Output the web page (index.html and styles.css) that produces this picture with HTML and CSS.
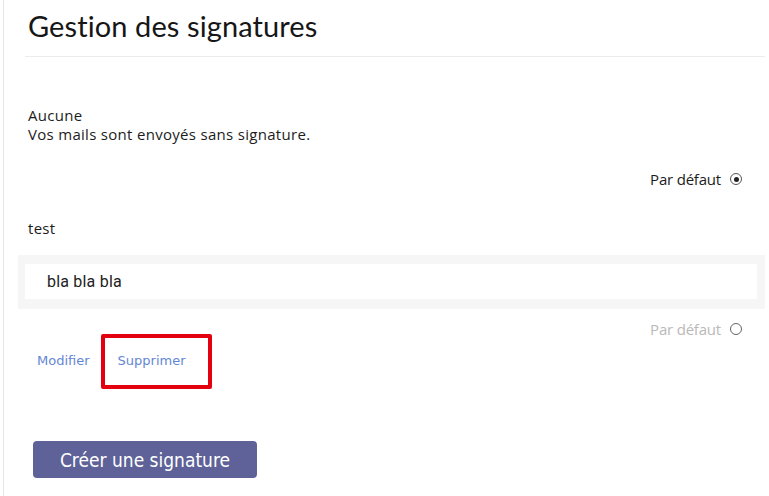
FILE: index.html
```html
<!DOCTYPE html>
<html lang="fr">
<head>
<meta charset="utf-8">
<title>Gestion des signatures</title>
<link rel="stylesheet" href="styles.css">
</head>
<body>
<div class="page">
  <header class="header">
    <h1 class="title">Gestion des signatures</h1>
  </header>

  <section class="sig sig-none">
    <div class="sig-name">Aucune</div>
    <div class="sig-desc">Vos mails sont envoyés sans signature.</div>
    <div class="default-row">
      <span class="default-label">Par défaut</span>
      <span class="radio radio-on"><span class="dot"></span></span>
    </div>
  </section>

  <section class="sig sig-test">
    <div class="sig-name">test</div>
    <div class="preview">
      <div class="preview-inner">bla bla bla</div>
    </div>
    <div class="default-row muted">
      <span class="default-label">Par défaut</span>
      <span class="radio"></span>
    </div>
    <div class="actions">
      <a class="action" href="#">Modifier</a>
      <a class="action action-marked" href="#">Supprimer<span class="mark"></span></a>
    </div>
  </section>

  <div class="footer">
    <button class="btn-create" type="button">Créer une signature</button>
  </div>
</div>
</body>
</html>
```
FILE: styles.css
```css
html, body {
  margin: 0;
  padding: 0;
  background: #ffffff;
}

body {
  font-family: "Open Sans", Lato, sans-serif;
  color: #1a1a1a;
  width: 769px;
  height: 496px;
  overflow: hidden;
}

.page {
  margin-left: 3px;
  border-left: 1px solid #e6e6e6;
  height: 496px;
  padding-left: 21px;
  padding-right: 4px;
  box-sizing: border-box;
}

.header {
  height: 57px;
  border-bottom: 1px solid #ececec;
  box-sizing: border-box;
  padding-left: 3px;
  padding-top: 9px;
}

.title {
  margin: 0;
  font-family: Lato, sans-serif;
  font-weight: 400;
  font-size: 29px;
  line-height: 34px;
  color: #161616;
  letter-spacing: 0.1px;
}

.sig {
  padding-left: 3px;
}

.sig-none {
  padding-top: 49px;
}

.sig-name,
.sig-desc {
  font-size: 15px;
  line-height: 19px;
  letter-spacing: 0.3px;
  color: #1c1c1c;
}

.default-row {
  display: flex;
  justify-content: flex-end;
  align-items: center;
  gap: 9px;
  padding-right: 23px;
  height: 24px;
  font-size: 15px;
  letter-spacing: -0.2px;
  color: #1c1c1c;
}

.sig-none .default-row {
  margin-top: 23px;
}

.default-row.muted {
  color: #b9b9b9;
  margin-top: 8px;
}

.radio {
  width: 10px;
  height: 10px;
  border: 1px solid #555;
  border-radius: 50%;
  display: flex;
  align-items: center;
  justify-content: center;
}

.muted .radio {
  border-color: #666;
}

.dot {
  width: 5px;
  height: 5px;
  border-radius: 50%;
  background: #222;
}

.sig-test {
  padding-top: 27px;
}

.sig-test .sig-name {
  line-height: 20px;
}

.preview {
  margin-top: 17px;
  margin-left: -10px;
  background: #f6f6f6;
  padding: 9px 8px 10px 7px;
}

.preview-inner {
  background: #ffffff;
  height: 35px;
  box-sizing: border-box;
  padding-left: 22px;
  display: flex;
  align-items: center;
  font-family: Roboto, "Liberation Sans", sans-serif;
  font-size: 16px;
  letter-spacing: 0.2px;
  color: #222;
}

.actions {
  display: flex;
  gap: 28px;
  margin-top: 4px;
  padding-left: 9px;
  height: 30px;
  align-items: center;
}

.action {
  font-family: "DejaVu Sans", Verdana, sans-serif;
  font-size: 13px;
  color: #6487d4;
  text-decoration: none;
  position: relative;
}

.mark {
  position: absolute;
  left: -17px;
  top: -19px;
  width: 111px;
  height: 55px;
  border: 4px solid #e3000f;
  border-radius: 2px;
  box-sizing: border-box;
}

.footer {
  padding-top: 66px;
  padding-left: 8px;
}

.btn-create {
  width: 224px;
  height: 37px;
  border: none;
  border-radius: 4px;
  background: #5e6298;
  color: #ffffff;
  font-family: "DejaVu Sans Condensed", "DejaVu Sans", sans-serif;
  font-size: 19px;
  padding: 0;
  cursor: pointer;
}
```
